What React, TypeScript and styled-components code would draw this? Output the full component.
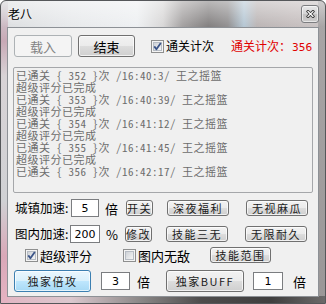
import React from 'react';
import styled, { createGlobalStyle } from 'styled-components';

const GlobalStyle = createGlobalStyle`
  html, body {
    margin: 0;
    padding: 0;
    background: #ffffff;
  }
  body {
    font-family: "Noto Sans CJK SC", "Liberation Sans", sans-serif;
    color: #000;
  }
`;

const Window = styled.div`
  width: 326px;
  height: 304px;
  box-sizing: border-box;
  display: flex;
  flex-direction: column;
  border: 1px solid #55575a;
  border-radius: 6px 6px 0 0;
  overflow: hidden;
  background:
    linear-gradient(180deg, rgba(255, 255, 255, 0.45), rgba(255, 255, 255, 0) 26px),
    linear-gradient(180deg, #d2d3d6 0, #c8a9b6 40px, #d8d3d6 75px, #d0d1d4 200px, #d9a8b8 255px, #e6b4c3 304px) left top / 7px 100% no-repeat,
    linear-gradient(90deg, #e2b5c3 0, #dbc8ce 70px, #8a8787 140px, #4e4c4c 200px, #3f3e3e 270px, #6d6b6b 326px) left bottom / 100% 7px no-repeat,
    linear-gradient(180deg, #a9a6a7 0, #9a9797 304px) right top / 7px 100% no-repeat,
    linear-gradient(90deg, #dcdee0 0%, #e8eaec 22%, #eef0f2 42%, #d8d7d7 50%, #a4a1a1 56%, #827f7f 64%, #918f90 70%, #b6c8d5 75%, #bbb5b5 79%, #c4bdbd 90%, #cac4c4 100%);
`;

const TitleBar = styled.div`
  height: 26px;
  flex: none;
  display: flex;
  align-items: center;
  justify-content: space-between;
  padding: 0 6px 0 7px;
`;

const Title = styled.span`
  font-size: 12px;
  line-height: 14px;
  color: #000;
  text-shadow: 0 0 6px rgba(255, 255, 255, 0.9);
`;

const CloseButton = styled.div`
  width: 18px;
  height: 18px;
  box-sizing: border-box;
  border: 1px solid #7c7d80;
  border-radius: 3px;
  background: linear-gradient(180deg, #e8e8e9 0%, #d4d4d5 50%, #c3c2c2 51%, #cac9c9 100%);
  box-shadow: inset 0 0 0 1px rgba(255, 255, 255, 0.55);
  display: flex;
  align-items: center;
  justify-content: center;
`;

const Client = styled.div`
  flex: none;
  width: 312px;
  height: 270px;
  margin: 0 6px;
  box-sizing: border-box;
  border: 1px solid #8d9196;
  background: #f0f0f0;
  display: flex;
  flex-direction: column;
`;

const Row = styled.div<{ $top: number; $height: number }>`
  display: flex;
  align-items: center;
  margin-top: ${({ $top }) => $top}px;
  height: ${({ $height }) => $height}px;
  flex: none;
`;

type BtnKind = 'normal' | 'disabled' | 'focus';

const Button = styled.div<{ $w: number; $h: number; $kind?: BtnKind; $gap?: number; $small?: boolean }>`
  width: ${({ $w }) => $w}px;
  height: ${({ $h }) => $h}px;
  margin-left: ${({ $gap }) => $gap ?? 0}px;
  box-sizing: border-box;
  flex: none;
  display: flex;
  align-items: center;
  justify-content: center;
  border-radius: 3px;
  font-size: ${({ $small }) => ($small ? 11 : 13)}px;
  letter-spacing: ${({ $small }) => ($small ? 1.5 : 0)}px;
  line-height: 1;
  border: 1px solid
    ${({ $kind }) => ($kind === 'disabled' ? '#adb2b5' : $kind === 'focus' ? '#3c7fb1' : '#707070')};
  color: ${({ $kind, $small }) => ($kind === 'disabled' ? '#838383' : $small ? '#1a1a1a' : '#000')};
  background: ${({ $kind }) =>
    $kind === 'disabled'
      ? '#f4f4f4'
      : $kind === 'focus'
        ? 'linear-gradient(180deg, #eaf6fd 0%, #d9f0fc 50%, #bee6fd 51%, #a7d9f5 100%)'
        : 'linear-gradient(180deg, #f2f2f2 0%, #ebebeb 50%, #dddddd 51%, #cfcfcf 100%)'};
  box-shadow: ${({ $kind }) => ($kind === 'disabled' ? 'none' : 'inset 0 0 0 1px rgba(255, 255, 255, 0.7)')};
`;

const CheckLabel = styled.div<{ $gap?: number; $size?: number }>`
  display: flex;
  align-items: center;
  margin-left: ${({ $gap }) => $gap ?? 0}px;
  font-size: ${({ $size }) => $size ?? 13}px;
  line-height: 1;
  gap: 2px;
  flex: none;
`;

const CountLabel = styled.div<{ $gap: number }>`
  margin-left: ${({ $gap }) => $gap}px;
  font-size: 12px;
  color: #e00000;
  line-height: 1;
  white-space: nowrap;
  display: flex;
  align-items: baseline;
`;

const CountNum = styled.span`
  font-family: "DejaVu Sans", "Liberation Sans", sans-serif;
  font-size: 10.5px;
  margin-left: 1px;
`;

const LogBox = styled.div`
  margin: 10px 0 0 5px;
  width: 300px;
  height: 126px;
  box-sizing: border-box;
  border: 1px solid #a5a7aa;
  border-radius: 2px;
  background: #f0f0f0;
  padding: 1px 0 0 2px;
  overflow: hidden;
`;

const LogLine = styled.div`
  font-family: "Noto Sans Mono CJK SC", "Noto Sans CJK SC", monospace;
  font-size: 11px;
  letter-spacing: 0.5px;
  line-height: 12px;
  height: 12px;
  color: #6d6d6d;
  white-space: pre;
`;

const Label = styled.div<{ $w: number; $gap?: number }>`
  width: ${({ $w }) => $w}px;
  margin-left: ${({ $gap }) => $gap ?? 0}px;
  font-size: 12.5px;
  line-height: 1;
  white-space: nowrap;
  flex: none;
`;

const Field = styled.div<{ $w: number; $h: number; $gap?: number }>`
  width: ${({ $w }) => $w}px;
  height: ${({ $h }) => $h}px;
  margin-left: ${({ $gap }) => $gap ?? 0}px;
  box-sizing: border-box;
  border: 1px solid #7b7d80;
  background: #ffffff;
  display: flex;
  align-items: center;
  justify-content: center;
  font-family: "DejaVu Sans", "Liberation Sans", sans-serif;
  font-size: 11px;
  flex: none;
`;

const Unit = styled.div<{ $gap: number; $w?: number }>`
  margin-left: ${({ $gap }) => $gap}px;
  width: ${({ $w }) => $w ?? 13}px;
  font-size: 13px;
  line-height: 1;
  flex: none;
`;

const CheckBox: React.FC<{ checked?: boolean }> = ({ checked }) => (
  <svg width="13" height="13" viewBox="0 0 13 13">
    <defs>
      <linearGradient id="cbg" x1="0" y1="0" x2="1" y2="1">
        <stop offset="0" stopColor="#cbcfd5" />
        <stop offset="1" stopColor="#f7f7f7" />
      </linearGradient>
    </defs>
    <rect x="0.5" y="0.5" width="12" height="12" fill="#f4f4f4" stroke="#8e8f8f" />
    <rect x="2.5" y="2.5" width="8" height="8" fill="url(#cbg)" stroke="#b6bcc4" />
    {checked && (
      <path d="M3.3 6.4 L5.4 9.2 L9.8 3" stroke="#3b5488" strokeWidth="1.8" fill="none" strokeLinejoin="round" />
    )}
  </svg>
);

const CloseGlyph = () => (
  <svg width="9" height="8" viewBox="0 0 9 8">
    <path d="M2 1.5 L7 6.5 M7 1.5 L2 6.5" stroke="#3a3a3a" strokeWidth="3" strokeLinecap="square" />
    <path d="M2 1.5 L7 6.5 M7 1.5 L2 6.5" stroke="#ffffff" strokeWidth="1.2" strokeLinecap="square" />
  </svg>
);

const logs = [
  '已通关 { 352 }次 /16:40:3/ 王之摇篮',
  '超级评分已完成',
  '已通关 { 353 }次 /16:40:39/ 王之摇篮',
  '超级评分已完成',
  '已通关 { 354 }次 /16:41:12/ 王之摇篮',
  '超级评分已完成',
  '已通关 { 355 }次 /16:41:45/ 王之摇篮',
  '超级评分已完成',
  '已通关 { 356 }次 /16:42:17/ 王之摇篮',
];

export default function App() {
  return (
    <>
      <GlobalStyle />
      <Window>
        <TitleBar>
          <Title>老八</Title>
          <CloseButton>
            <CloseGlyph />
          </CloseButton>
        </TitleBar>
        <Client>
          <Row $top={7} $height={22}>
            <Button $w={58} $h={22} $kind="disabled" $gap={6}>载入</Button>
            <Button $w={57} $h={22} $gap={6}>结束</Button>
            <CheckLabel $gap={16} $size={12}>
              <CheckBox checked />
              通关计次
            </CheckLabel>
            <CountLabel $gap={17}>
              通关计次：<CountNum>356</CountNum>
            </CountLabel>
          </Row>

          <LogBox>
            {logs.map((line, i) => (
              <LogLine key={i}>{line}</LogLine>
            ))}
          </LogBox>

          <Row $top={6} $height={18}>
            <Label $w={56} $gap={7}>城镇加速:</Label>
            <Field $w={28} $h={18}>5</Field>
            <Unit $gap={6}>倍</Unit>
            <Button $w={27} $h={16} $gap={8} $small>开关</Button>
            <Button $w={62} $h={16} $gap={14} $small>深夜福利</Button>
            <Button $w={62} $h={16} $gap={17} $small>无视麻瓜</Button>
          </Row>

          <Row $top={8} $height={18}>
            <Label $w={55} $gap={7}>图内加速:</Label>
            <Field $w={30} $h={18}>200</Field>
            <Unit $gap={6}>%</Unit>
            <Button $w={27} $h={16} $gap={6} $small>修改</Button>
            <Button $w={62} $h={16} $gap={14} $small>技能三无</Button>
            <Button $w={62} $h={16} $gap={17} $small>无限耐久</Button>
          </Row>

          <Row $top={4} $height={16}>
            <CheckLabel $gap={17}>
              <CheckBox checked />
              超级评分
            </CheckLabel>
            <CheckLabel $gap={31}>
              <CheckBox />
              图内无敌
            </CheckLabel>
            <Button $w={61} $h={16} $gap={20} $small>技能范围</Button>
          </Row>

          <Row $top={7} $height={22}>
            <Button $w={77} $h={22} $kind="focus" $gap={6} $small>独家倍攻</Button>
            <Field $w={29} $h={18} $gap={10}>3</Field>
            <Unit $gap={7}>倍</Unit>
            <Button $w={78} $h={22} $gap={16} $small>独家BUFF</Button>
            <Field $w={30} $h={18} $gap={9}>1</Field>
            <Unit $gap={10}>倍</Unit>
          </Row>
        </Client>
      </Window>
    </>
  );
}
